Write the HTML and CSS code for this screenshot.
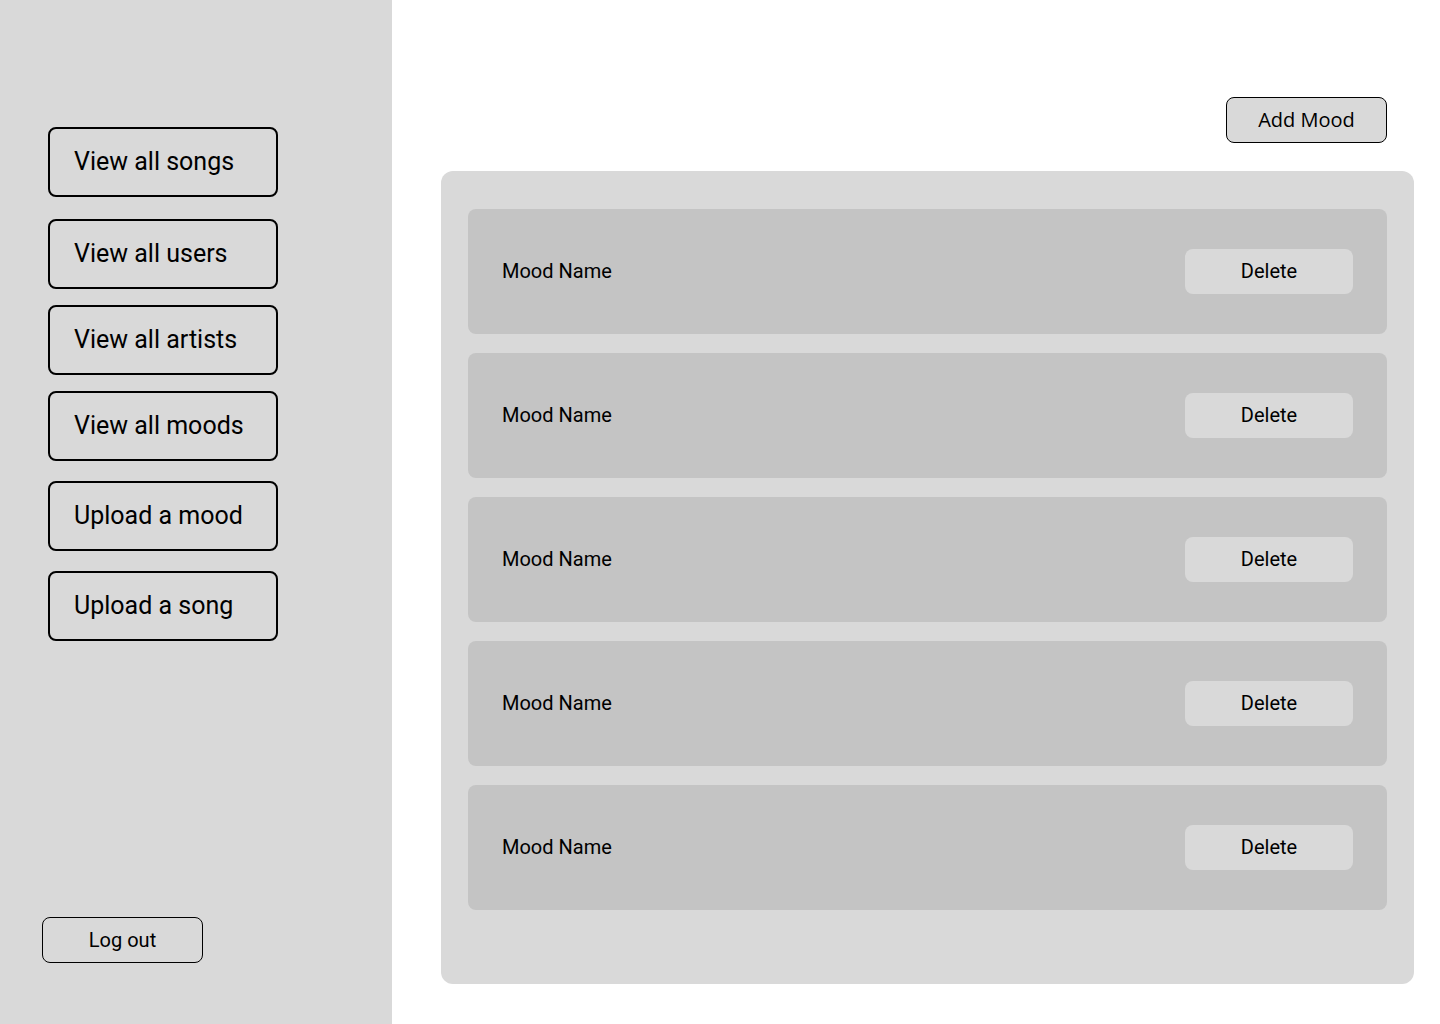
FILE: index.html
```html
<!DOCTYPE html>
<html lang="en">
<head>
<meta charset="utf-8">
<title>Moods</title>
<link rel="stylesheet" href="styles.css">
</head>
<body>
<div class="app">
  <aside class="sidebar">
    <nav class="nav">
      <button class="nav-btn">View all songs</button>
      <button class="nav-btn">View all users</button>
      <button class="nav-btn">View all artists</button>
      <button class="nav-btn">View all moods</button>
      <button class="nav-btn">Upload a mood</button>
      <button class="nav-btn">Upload a song</button>
    </nav>
    <button class="logout">Log out</button>
  </aside>
  <main class="main">
    <div class="toolbar">
      <button class="add-btn">Add Mood</button>
    </div>
    <section class="panel">
      <div class="row"><span class="name">Mood Name</span><button class="del">Delete</button></div>
      <div class="row"><span class="name">Mood Name</span><button class="del">Delete</button></div>
      <div class="row"><span class="name">Mood Name</span><button class="del">Delete</button></div>
      <div class="row"><span class="name">Mood Name</span><button class="del">Delete</button></div>
      <div class="row"><span class="name">Mood Name</span><button class="del">Delete</button></div>
    </section>
  </main>
</div>
</body>
</html>
```
FILE: styles.css
```css
* { box-sizing: border-box; }
html, body { margin: 0; padding: 0; }
body {
  width: 1440px;
  height: 1024px;
  font-family: Roboto, "Liberation Sans", sans-serif;
  color: #000;
  background: #fff;
  overflow: hidden;
}
button { font-family: inherit; color: #000; cursor: pointer; margin: 0; }
.app { display: flex; height: 1024px; }
.sidebar {
  width: 392px;
  flex: none;
  background: #d9d9d9;
  display: flex;
  flex-direction: column;
  padding: 127px 0 61px 0;
}
.nav {
  display: flex;
  flex-direction: column;
  gap: 16px;
  padding-left: 48px;
}
.nav-btn {
  width: 230px;
  height: 70px;
  border: 2px solid #000;
  border-radius: 8px;
  background: #d9d9d9;
  text-align: left;
  padding: 0 0 1px 24px;
  font-size: 25px;
  line-height: 29px;
}
.nav-btn:nth-child(1) { margin-bottom: 6px; }
.nav-btn:nth-child(4), .nav-btn:nth-child(5) { margin-bottom: 4px; }
.logout {
  margin-top: auto;
  margin-left: 42px;
  width: 161px;
  height: 46px;
  border: 1px solid #000;
  border-radius: 8px;
  background: #d9d9d9;
  font-size: 20px;
  padding: 0;
}
.main {
  flex: 1;
  padding: 97px 26px 40px 49px;
  display: flex;
  flex-direction: column;
}
.toolbar {
  display: flex;
  justify-content: flex-end;
  padding-right: 27px;
  margin-bottom: 28px;
}
.add-btn {
  width: 161px;
  height: 46px;
  border: 1px solid #000;
  border-radius: 8px;
  background: #d9d9d9;
  font-family: "Open Sans", "Noto Sans", sans-serif;
  font-size: 20px;
  padding: 0 0 2px 0;
}
.panel {
  height: 813px;
  background: #d9d9d9;
  border-radius: 12px;
  padding: 38px 27px;
  display: flex;
  flex-direction: column;
  gap: 19px;
}
.row {
  height: 125px;
  background: #c4c4c4;
  border-radius: 8px;
  display: flex;
  align-items: center;
  justify-content: space-between;
  padding: 0 34px;
}
.name { font-size: 20px; padding-bottom: 2px; }
.del {
  width: 168px;
  height: 45px;
  border: none;
  border-radius: 8px;
  background: #d9d9d9;
  font-size: 20px;
  padding: 0 0 2px 0;
}
```
